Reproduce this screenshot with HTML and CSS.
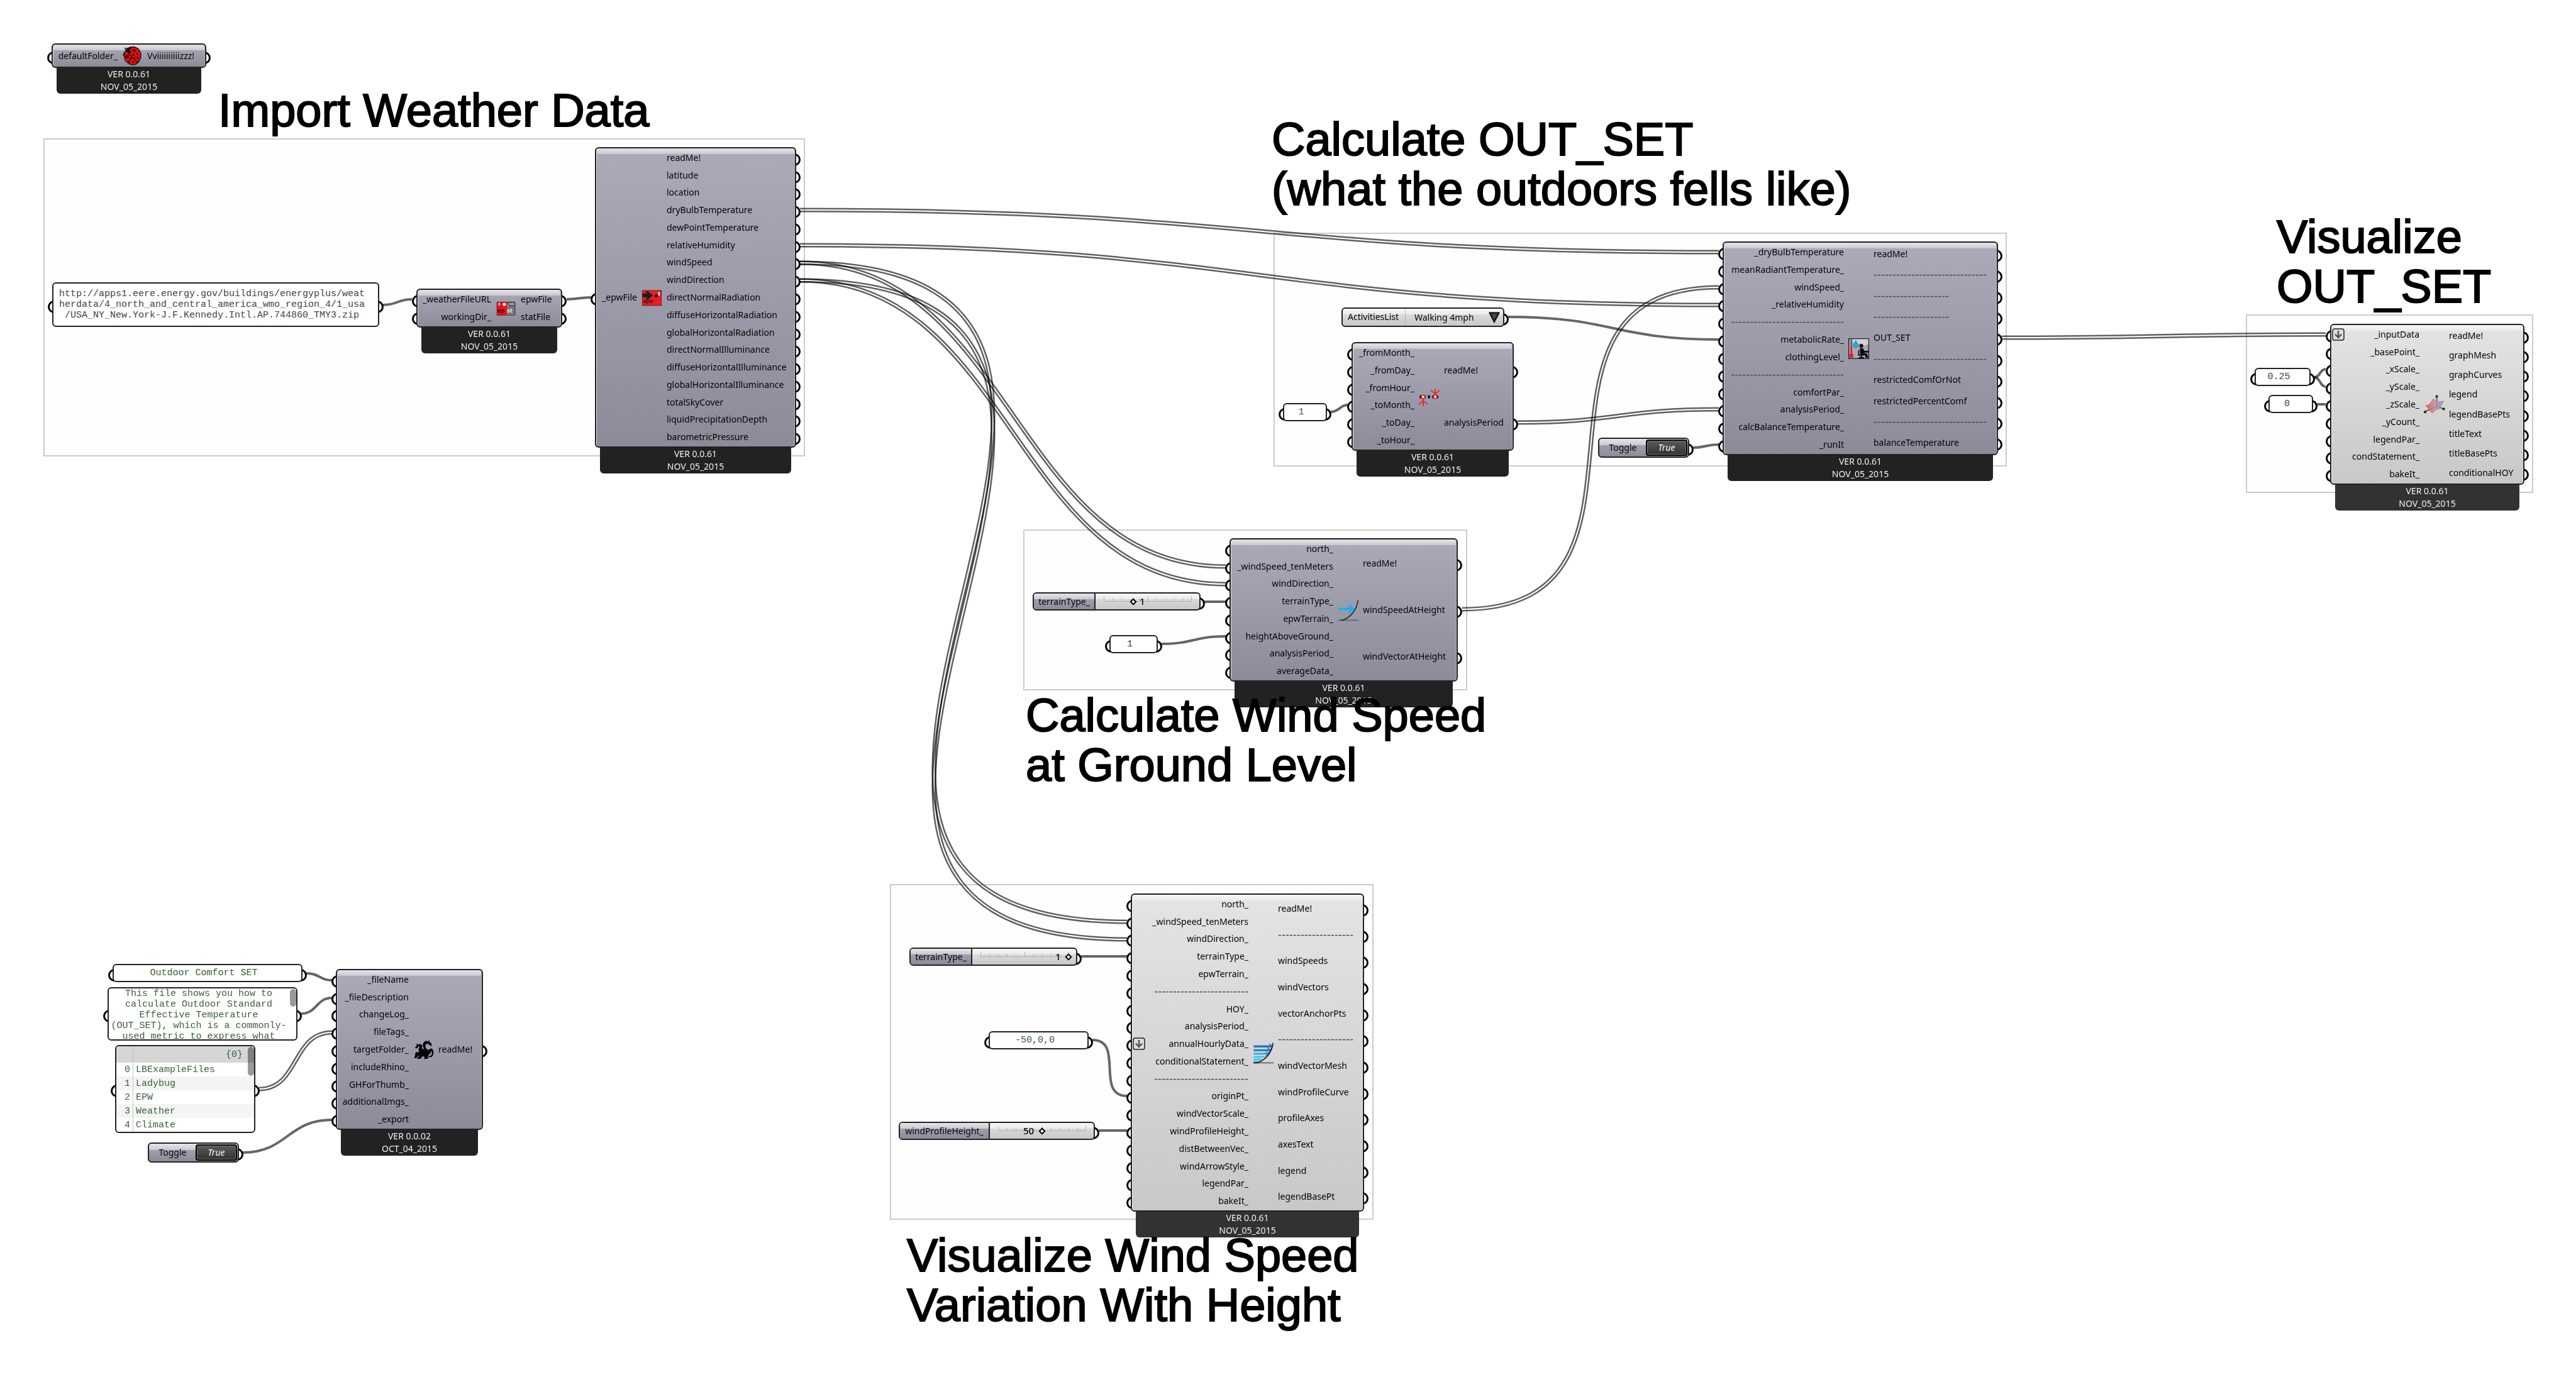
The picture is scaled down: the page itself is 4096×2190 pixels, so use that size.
FILE: index.html
```html
<!DOCTYPE html>
<html lang="en">
<head>
<meta charset="utf-8">
<title>Outdoor Comfort SET</title>
<link rel="stylesheet" href="styles.css">
</head>
<body>
<main class="canvas">

  <section class="group group-weather"></section>
  <section class="group group-set"></section>
  <section class="group group-view"></section>
  <section class="group group-wind"></section>
  <section class="group group-profile"></section>

  <svg class="wires" aria-hidden="true">
    <defs>
      <path id="w-drybulb" d="M1272 334 C2002 334 2003 401 2733 401"/>
      <path id="w-humidity" d="M1272 390 C2002 390 2003 485 2733 485"/>
      <path id="w-speed-ground" d="M1272 418 C1612 418 1609 901 1949 901"/>
      <path id="w-dir-ground" d="M1272 446 C1612 446 1609 929 1949 929"/>
      <path id="w-speed-profile" d="M1272 418 C2044 418 1020 1466 1792 1466"/>
      <path id="w-dir-profile" d="M1272 446 C2044 446 1020 1494 1792 1494"/>
      <path id="w-height-set" d="M2325 969 C2687 969 2371 457 2733 457"/>
      <path id="w-period" d="M2413 672 C2573 672 2573 651 2733 651"/>
      <path id="w-set-view" d="M3183 537 C3440 537 3441 532 3698 532"/>
      <path id="w-tags" d="M412 1732 C476 1732 464 1642 528 1642"/>
    </defs>
    <g class="wire-list"><use href="#w-drybulb"/><use href="#w-drybulb" class="core"/></g>
    <g class="wire-list"><use href="#w-humidity"/><use href="#w-humidity" class="core"/></g>
    <g class="wire-list"><use href="#w-speed-ground"/><use href="#w-speed-ground" class="core"/></g>
    <g class="wire-list"><use href="#w-dir-ground"/><use href="#w-dir-ground" class="core"/></g>
    <g class="wire-list"><use href="#w-speed-profile"/><use href="#w-speed-profile" class="core"/></g>
    <g class="wire-list"><use href="#w-dir-profile"/><use href="#w-dir-profile" class="core"/></g>
    <g class="wire-list"><use href="#w-height-set"/><use href="#w-height-set" class="core"/></g>
    <g class="wire-list"><use href="#w-period"/><use href="#w-period" class="core"/></g>
    <g class="wire-list"><use href="#w-set-view"/><use href="#w-set-view" class="core"/></g>
    <g class="wire-list"><use href="#w-tags"/><use href="#w-tags" class="core"/></g>
    <g class="wire-item">
      <path d="M609 485 C632 485 632 476 655 476"/>
      <path d="M901 476 C920 476 920 473 940 473"/>
      <path d="M2398 504 C2565 504 2566 540 2733 540"/>
      <path d="M2116 655 C2130 655 2130 644 2143 644"/>
      <path d="M2692 712 C2712 712 2712 707 2733 707"/>
      <path d="M3680 600 C3689 600 3689 587 3698 587"/>
      <path d="M3680 600 C3689 600 3689 615 3698 615"/>
      <path d="M3684 643 H3698"/>
      <path d="M1915 957 H1949"/>
      <path d="M1847 1024 C1898 1024 1898 1012 1949 1012"/>
      <path d="M1719 1521 H1792"/>
      <path d="M1737 1654 C1789 1654 1740 1743 1792 1743"/>
      <path d="M1747 1798 H1792"/>
      <path d="M487 1548 C508 1548 508 1559 528 1559"/>
      <path d="M479 1612 C504 1612 503 1587 528 1587"/>
      <path d="M386 1833 C457 1833 457 1781 528 1781"/>
    </g>
  </svg>

  <!-- Ladybug -->
  <article class="node node-ladybug">
    <div class="body">
      <ul class="inputs"><li>defaultFolder_</li></ul>
      <svg class="icon" viewBox="0 0 24 24">
        <path d="M5 5 3 3M5 3l3 2M8 2l2 2M3 8 1 12" stroke="#222" stroke-width="1.2" fill="none"/>
        <path d="M9 2.500C14 .5 20 3 21.500 9c1.500 7-3 13-8.500 13.500C6.500 22.500 2 17 2.500 11 3 7 5 4 9 2.500z" fill="#f20808" stroke="#111" stroke-width="1"/>
        <path d="M4 7C5 4 8 2.500 11 3l-2 3-3 2z" fill="#151515"/>
        <path d="M7 9 18 20" stroke="#111" stroke-width=".8"/>
        <g fill="#111"><circle cx="8.500" cy="8" r="1.800"/><circle cx="14" cy="6" r="1.800"/><circle cx="17.500" cy="10" r="1.200"/><circle cx="13" cy="11" r="1.200"/><circle cx="6" cy="13" r="2"/><circle cx="10" cy="15.500" r="1.400"/><circle cx="18" cy="14.500" r="1.300"/><circle cx="14.500" cy="14.500" r=".9"/><circle cx="8.500" cy="19" r="1.200"/><circle cx="13" cy="19.500" r="1.100"/></g>
      </svg>
      <ul class="outputs"><li>Vviiiiiiiiiizzz!</li></ul>
    </div>
    <footer>VER 0.0.61<br>NOV_05_2015</footer>
  </article>

  <h2 class="title title-weather">Import Weather Data</h2>

  <div class="panel panel-url"><div class="sheet">http://apps1.eere.energy.gov/buildings/energyplus/weat<br>herdata/4_north_and_central_america_wmo_region_4/1_usa<br>/USA_NY_New.York-J.F.Kennedy.Intl.AP.744860_TMY3.zip</div></div>

  <article class="node node-download">
    <div class="body">
      <ul class="inputs"><li>_weatherFileURL</li><li>workingDir_</li></ul>
      <svg class="icon" viewBox="0 0 24 24">
        <rect x="1.500" y="4.500" width="12" height="15.500" fill="#e8131b"/>
        <rect x="13.500" y="9.500" width="9.500" height="10.500" fill="#77777c"/>
        <rect x="1.500" y="4.500" width="21" height="15.500" rx="1" fill="none" stroke="#333" stroke-width=".8" stroke-dasharray="1.500 .7"/>
        <path d="M14 5h8v4h-6z" fill="#9a9aa4" stroke="#333" stroke-width=".8"/>
        <rect x="3.500" y="5.500" width="1.300" height="3" fill="#fff"/><circle cx="10" cy="7.500" r="1.800" fill="#fff"/>
        <text x="2" y="17" font-size="7" font-weight="700" fill="#3a0508">ep</text><text x="13" y="17" font-size="7" font-weight="700" fill="#eee">st</text>
      </svg>
      <ul class="outputs"><li>epwFile</li><li>statFile</li></ul>
    </div>
    <footer>VER 0.0.61<br>NOV_05_2015</footer>
  </article>

  <article class="node node-epw">
    <div class="body">
      <ul class="inputs"><li>_epwFile</li></ul>
      <svg class="icon" viewBox="0 0 24 24">
        <rect x="1" y="3.500" width="22" height="17.500" fill="#ec1c24" stroke="#5a1216" stroke-width=".8" stroke-dasharray="1.500 .7"/>
        <path d="M1 7h6L4 4.500h3.500L13.500 9.500 7.500 14H4l3-2.500H1z" fill="#1c1c1c"/>
        <circle cx="17" cy="9.800" r="1.900" fill="#1c1c1c"/><rect x="19.500" y="5.500" width="1.600" height="4" fill="#fff"/>
        <text x="2" y="18.500" font-size="6" font-style="italic" font-weight="700" fill="#4a0a0d">epw</text>
      </svg>
      <ul class="outputs"><li>readMe!</li><li>latitude</li><li>location</li><li>dryBulbTemperature</li><li>dewPointTemperature</li><li>relativeHumidity</li><li>windSpeed</li><li>windDirection</li><li>directNormalRadiation</li><li>diffuseHorizontalRadiation</li><li>globalHorizontalRadiation</li><li>directNormalIlluminance</li><li>diffuseHorizontalIlluminance</li><li>globalHorizontalIlluminance</li><li>totalSkyCover</li><li>liquidPrecipitationDepth</li><li>barometricPressure</li></ul>
    </div>
    <footer>VER 0.0.61<br>NOV_05_2015</footer>
  </article>

  <!-- Outdoor comfort -->
  <h2 class="title title-set">Calculate OUT_SET<br>(what the outdoors fells like)</h2>

  <div class="picker">
    <div class="picker-box">
      <label for="activity">ActivitiesList</label>
      <select id="activity"><option>Walking 4mph</option></select>
      <svg class="arrow" viewBox="0 0 18 18"><path d="M1.500 1.500h15L9 16z" fill="#444" stroke="#000" stroke-width="2"/></svg>
    </div>
  </div>

  <div class="panel panel-month"><div class="sheet green">1</div></div>

  <article class="node node-period">
    <div class="body">
      <ul class="inputs"><li>_fromMonth_</li><li>_fromDay_</li><li>_fromHour_</li><li>_toMonth_</li><li>_toDay_</li><li>_toHour_</li></ul>
      <svg class="icon" viewBox="0 0 24 24">
        <path d="M1 12.500h7M10.500 12.500h2.500M15.500 12.500h7" stroke="#111" stroke-width="3.500"/>
        <g stroke="#ee1c24" stroke-width="1.300" fill="none"><path d="M5 14v9M5 17l-5 4M5 17l5 4M19 11V3M19 9l-5-4M19 9l5-4"/><circle cx="5" cy="12.500" r="2" fill="#fff"/><circle cx="19" cy="12.300" r="2" fill="#fff"/></g>
      </svg>
      <ul class="outputs"><li>readMe!</li><li>analysisPeriod</li></ul>
    </div>
    <footer>VER 0.0.61<br>NOV_05_2015</footer>
  </article>

  <div class="toggle toggle-run">
    <div class="toggle-box"><label for="run">Toggle</label><button id="run" type="button">True</button></div>
  </div>

  <article class="node node-set">
    <div class="body">
      <ul class="inputs"><li>_dryBulbTemperature</li><li>meanRadiantTemperature_</li><li>windSpeed_</li><li>_relativeHumidity</li><li class="rule">------------------------------</li><li>metabolicRate_</li><li>clothingLevel_</li><li class="rule">------------------------------</li><li>comfortPar_</li><li>analysisPeriod_</li><li>calcBalanceTemperature_</li><li>_runIt</li></ul>
      <svg class="icon" viewBox="0 0 24 24">
        <rect x=".5" y=".5" width="23" height="23" fill="#a9a9b2" stroke="#222"/>
        <path d="M5 1h18v6l-5 1-4-2-4 1-5-2z" fill="#d2d2d6"/>
        <path d="M8.500 2.500c1.500 2.500 3 4 3 5.500a2.900 2.900 0 0 1-5.800 0c0-1.500 1.500-3 2.800-5.500z" fill="#29a9e1" stroke="#1579a8" stroke-width=".5"/>
        <path d="M3.500 2v9" stroke="#555" stroke-width="1.500"/><path d="M3.500 10v9" stroke="#ed1c24" stroke-width="2"/><circle cx="3.500" cy="20.300" r="2.400" fill="#ed1c24"/>
        <circle cx="15" cy="8.800" r="2.200" fill="#0c0c0c"/>
        <path d="M13 11.500h4l1.500 3h5v2h-5l.5 1h2.500l1.500 5h-3l-1-3h-5z" fill="#0c0c0c"/><path d="M12 14v5.500h6M15 19v3.500M12 22.500h6" stroke="#0c0c0c" stroke-width="1.400" fill="none"/>
      </svg>
      <ul class="outputs"><li>readMe!</li><li class="rule">------------------------------</li><li class="rule">--------------------</li><li class="rule">--------------------</li><li>OUT_SET</li><li class="rule">------------------------------</li><li>restrictedComfOrNot</li><li>restrictedPercentComf</li><li class="rule">------------------------------</li><li>balanceTemperature</li></ul>
    </div>
    <footer>VER 0.0.61<br>NOV_05_2015</footer>
  </article>

  <!-- Visualize OUT_SET -->
  <h2 class="title title-view">Visualize<br>OUT_SET</h2>

  <div class="panel panel-scale"><div class="sheet">0.25</div></div>
  <div class="panel panel-zero"><div class="sheet">0</div></div>

  <article class="node light node-view">
    <div class="body">
      <ul class="inputs"><li><svg class="flatten" viewBox="0 0 20 20"><rect x="1" y="1" width="18" height="18" rx="3" fill="#dcdcdc" stroke="#222" stroke-width="1.500"/><path d="M10 4v10M5 9.500l5 5.500 5-5.500" fill="none" stroke="#555" stroke-width="2.500"/></svg>_inputData</li><li>_basePoint_</li><li>_xScale_</li><li>_yScale_</li><li>_zScale_</li><li>_yCount_</li><li>legendPar_</li><li>condStatement_</li><li>bakeIt_</li></ul>
      <svg class="icon" viewBox="0 0 24 24">
        <defs><linearGradient id="surf"><stop offset="0" stop-color="#e8473f"/><stop offset=".5" stop-color="#c98d9c"/><stop offset="1" stop-color="#6f9fdc"/></linearGradient></defs>
        <path d="M15 3v11M15 14l8 3M15 14 1.500 20" stroke="#444" stroke-width="1"/>
        <path d="M2 13c4 0 6-3 9-8 3 3 7 4 12 3-2 3-3 6-5 9-2 0-5 1-8 5-2-1-3-4-8-9z" fill="url(#surf)" fill-opacity=".85" stroke="#a66" stroke-width=".4"/>
        <g fill="#222"><circle cx="15" cy="2.500" r="1.500"/><circle cx="23" cy="17" r="1.500"/><circle cx="1.500" cy="20.500" r="1.500"/></g>
      </svg>
      <ul class="outputs"><li>readMe!</li><li>graphMesh</li><li>graphCurves</li><li>legend</li><li>legendBasePts</li><li>titleText</li><li>titleBasePts</li><li>conditionalHOY</li></ul>
    </div>
    <footer>VER 0.0.61<br>NOV_05_2015</footer>
  </article>

  <!-- Wind speed at ground level -->
  <div class="slider slider-ground">
    <div class="slider-box">
      <label for="terrain-a">terrainType_</label>
      <div class="rail">
        <svg class="ticks" viewBox="0 0 140 8"><path d="M0 7.500h140M.5 0v8M14.500 3v5M28.500 3v5M42.500 3v5M56.500 3v5M70.500 0v8M84.500 3v5M98.500 3v5M112.500 3v5M126.500 3v5M139.500 0v8"/></svg>
        <input id="terrain-a" type="range" min="0" max="3" value="1">
        <output for="terrain-a">1</output>
      </div>
    </div>
  </div>
  <div class="panel panel-height"><div class="sheet">1</div></div>

  <article class="node node-ground">
    <div class="body">
      <ul class="inputs"><li>north_</li><li>_windSpeed_tenMeters</li><li>windDirection_</li><li>terrainType_</li><li>epwTerrain_</li><li>heightAboveGround_</li><li>analysisPeriod_</li><li>averageData_</li></ul>
      <svg class="icon" viewBox="0 0 24 24">
        <path d="M.5 23.500H24" stroke="#666" stroke-width="1.200"/>
        <path d="M1 10.500h14M13 6l5 4.500-5 4.500" stroke="#12b4f5" stroke-width="2.600" fill="none"/>
        <path d="M3 23.500h3C15 20 22 12 23.500.5" stroke="#333" stroke-width="1.300" fill="none"/>
      </svg>
      <ul class="outputs"><li>readMe!</li><li>windSpeedAtHeight</li><li>windVectorAtHeight</li></ul>
    </div>
    <footer>VER 0.0.61<br>NOV_05_2015</footer>
  </article>
  <h2 class="title title-ground">Calculate Wind Speed<br>at Ground Level</h2>

  <!-- Wind profile -->
  <div class="slider slider-terrain">
    <div class="slider-box">
      <label for="terrain-b">terrainType_</label>
      <div class="rail">
        <svg class="ticks" viewBox="0 0 140 8"><path d="M0 7.500h140M.5 0v8M14.500 3v5M28.500 3v5M42.500 3v5M56.500 3v5M70.500 0v8M84.500 3v5M98.500 3v5M112.500 3v5M126.500 3v5M139.500 0v8"/></svg>
        <input id="terrain-b" type="range" min="0" max="1" value="1">
        <output for="terrain-b">1</output>
      </div>
    </div>
  </div>
  <div class="panel panel-origin"><div class="sheet green">-50,0,0</div></div>
  <div class="slider slider-profile">
    <div class="slider-box">
      <label for="profile">windProfileHeight_</label>
      <div class="rail">
        <svg class="ticks" viewBox="0 0 140 8"><path d="M0 7.500h140M.5 0v8M14.500 3v5M28.500 3v5M42.500 3v5M56.500 3v5M70.500 0v8M84.500 3v5M98.500 3v5M112.500 3v5M126.500 3v5M139.500 0v8"/></svg>
        <input id="profile" type="range" min="0" max="100" value="50">
        <output for="profile">50</output>
      </div>
    </div>
  </div>

  <article class="node light node-profile">
    <div class="body">
      <ul class="inputs"><li>north_</li><li>_windSpeed_tenMeters</li><li>windDirection_</li><li>terrainType_</li><li>epwTerrain_</li><li class="rule">-------------------------</li><li>HOY_</li><li>analysisPeriod_</li><li><svg class="flatten" viewBox="0 0 20 20"><rect x="1" y="1" width="18" height="18" rx="3" fill="#dcdcdc" stroke="#222" stroke-width="1.500"/><path d="M10 4v10M5 9.500l5 5.500 5-5.500" fill="none" stroke="#555" stroke-width="2.500"/></svg>annualHourlyData_</li><li>conditionalStatement_</li><li class="rule">-------------------------</li><li>originPt_</li><li>windVectorScale_</li><li>windProfileHeight_</li><li>distBetweenVec_</li><li>windArrowStyle_</li><li>legendPar_</li><li>bakeIt_</li></ul>
      <svg class="icon" viewBox="0 0 24 24">
        <path d="M.5 23.500H24" stroke="#666" stroke-width="1.200"/>
        <path d="M1 4.500h21" stroke="#1f6fb8" stroke-width="2.400"/><path d="M1 9h20" stroke="#2484c8" stroke-width="2.400"/><path d="M1 13h18" stroke="#22a5e6" stroke-width="1.800"/><path d="M1 16.500h13M1 19.500h9M1 22h5" stroke="#35c6f4" stroke-width="1.800"/>
        <path d="M19 1.500l4 3-3 4.500M17 6l3.500 3-3 4M15 11l3 2-3 3" stroke="#1f7cc4" stroke-width="1.200" fill="none"/>
        <path d="M1 23.500h4C15 20 22 12 23.500.5" stroke="#222" stroke-width="1.300" fill="none"/>
      </svg>
      <ul class="outputs"><li>readMe!</li><li class="rule">--------------------</li><li>windSpeeds</li><li>windVectors</li><li>vectorAnchorPts</li><li class="rule">--------------------</li><li>windVectorMesh</li><li>windProfileCurve</li><li>profileAxes</li><li>axesText</li><li>legend</li><li>legendBasePt</li></ul>
    </div>
    <footer>VER 0.0.61<br>NOV_05_2015</footer>
  </article>
  <h2 class="title title-profile">Visualize Wind Speed<br>Variation With Height</h2>

  <!-- Export -->
  <div class="panel panel-name"><div class="sheet green">Outdoor Comfort SET</div></div>
  <div class="panel panel-about"><div class="sheet green">This file shows you how to<br>calculate Outdoor Standard<br>Effective Temperature<br>(OUT_SET), which is a commonly-<br>used metric to express what</div><i class="scroll"></i></div>
  <div class="panel panel-tags">
    <table class="sheet green">
      <thead><tr><th></th><th scope="col">{0}</th></tr></thead>
      <tbody>
        <tr><td>0</td><td>LBExampleFiles</td></tr>
        <tr><td>1</td><td>Ladybug</td></tr>
        <tr><td>2</td><td>EPW</td></tr>
        <tr><td>3</td><td>Weather</td></tr>
        <tr><td>4</td><td>Climate</td></tr>
      </tbody>
    </table>
    <i class="scroll"></i>
  </div>
  <div class="toggle toggle-export">
    <div class="toggle-box"><label for="export">Toggle</label><button id="export" type="button">True</button></div>
  </div>

  <article class="node node-export">
    <div class="body">
      <ul class="inputs"><li>_fileName</li><li>_fileDescription</li><li>changeLog_</li><li>fileTags_</li><li>targetFolder_</li><li>includeRhino_</li><li>GHForThumb_</li><li>additionalImgs_</li><li>_export</li></ul>
      <svg class="icon" viewBox="0 0 24 24">
        <path d="M13 11.500C10.500 8 10.500 5 13 2.500c1.500-1 3.500-1 4.500 0l1-2 .5 2.500 2 1.500.3 3.500-1.300-.5-3-2.500-2 .5c-1.500 1.500-1 3.500.5 5.500l2.500 1.500c1-2 2.500-2.500 4-1.500 2 2 2 5.500.5 8l-1.500 1.500h-3.500l1-1.500h2c1.500-2 1.500-3.500.5-5.500-1 2-1.500 3.500-3 4.500l-1 1.500.5 1.500-1 1.500h-4.500l1.500-2-2.500-1-2.500 3H4.500l2-4-1 .5-2 3-1.500-.5-1 .5 1-3 .5-3 1-1.500 2 .5 1.500-1-1-2 1-3-.5-2-1.500 3-1.500.5-1.500-1L2.500 9 4 7V4.500l1.500 1.500c2-1 4-.8 5 1.500L10 10.500z" fill="#060606"/>
      </svg>
      <ul class="outputs"><li>readMe!</li></ul>
    </div>
    <footer>VER 0.0.02<br>OCT_04_2015</footer>
  </article>

</main>
</body>
</html>
```
FILE: styles.css
```css
* { box-sizing: border-box; }
html, body { height: 100%; }
body {
  margin: 0;
  background: #fff;
  color: #000;
  font: 14px/20px "Noto Sans", "Open Sans", sans-serif;
}
ul { list-style: none; margin: 0; padding: 0; }

.canvas { position: relative; width: 100%; min-height: 100%; overflow: hidden; }

/* Group frames */
.group { position: absolute; border: 2px solid #cbcbcb; background: #fefefe; }
.group-weather { left: 69px; top: 220px; width: 1211px; height: 506px; }
.group-set { left: 2025px; top: 370px; width: 1166px; height: 372px; }
.group-view { left: 3571px; top: 500px; width: 457px; height: 284px; }
.group-wind { left: 1627px; top: 842px; width: 706px; height: 256px; }
.group-profile { left: 1415px; top: 1406px; width: 769px; height: 534px; }

/* Wires */
.wires { position: absolute; left: 0; top: 0; width: 100%; height: 100%; fill: none; }
.wire-list { mix-blend-mode: multiply; stroke: #606060; stroke-width: 7px; }
.wire-list .core { stroke: #fff; stroke-width: 2px; }
.wire-item path { mix-blend-mode: multiply; stroke: #666; stroke-width: 4px; }

/* Headings */
.title {
  position: absolute;
  margin: 0;
  font: 400 74px/79px "Liberation Sans", Arial, sans-serif;
  white-space: nowrap;
  -webkit-text-stroke: 2px #000;
}
.title-weather { left: 347px; top: 136px; }
.title-set { left: 2022px; top: 182px; }
.title-view { left: 3620px; top: 337px; }
.title-ground { left: 1631px; top: 1098px; }
.title-profile { left: 1442px; top: 1957px; }

/* Components */
.node, .panel, .toggle, .slider, .picker { position: absolute; isolation: isolate; }
.body {
  display: flex;
  padding: 1px 0;
  border: 2px solid #222;
  border-radius: 6px;
  background: linear-gradient(#e6e5ea, #c8c8d1) 0 0 / 100% 9px no-repeat,
              linear-gradient(#abaab8, #8c8b99);
  box-shadow: inset 1px 1px 0 #dddde3, inset -1px 0 0 #b9b9c4;
}
.light .body {
  background: linear-gradient(#f7f7f7, #eaeaea) 0 0 / 100% 9px no-repeat,
              linear-gradient(#e4e4e4, #c8c8c8);
  box-shadow: inset 1px 1px 0 #f6f6f6, inset -1px 0 0 #e0e0e0;
}
.inputs, .outputs { display: flex; flex-direction: column; white-space: nowrap; }
.inputs { flex: 1; }
.inputs li, .outputs li { position: relative; flex: 1; display: flex; align-items: center; }
.inputs li { justify-content: flex-end; }
.icon { flex: none; align-self: center; width: 33px; height: 33px; margin: 0 7px; overflow: visible; }
.rule { font: 18px/20px "Liberation Sans", Arial, sans-serif; color: #4a4a50; }
.flatten { position: absolute; left: 1px; top: calc(50% - 10px); width: 20px; height: 20px; }
.node footer {
  height: 41px;
  margin: 0 8px;
  border-radius: 0 0 6px 6px;
  background: #222;
  color: #f0f0f0;
  text-align: center;
}
.light footer { background: #323232; }

/* Ports */
.inputs li::before, .outputs li::after,
.panel::before, .panel::after, .toggle::after, .slider::after, .picker::after {
  content: "";
  position: absolute;
  z-index: -1;
  top: calc(50% - 7px);
  width: 14px;
  height: 14px;
  border: 3px solid #000;
  border-radius: 50%;
  background: #fff;
}
.inputs li::before { left: -9px; }
.outputs li::after { right: -9px; }
.panel::before { left: -7px; }
.panel::after, .toggle::after, .slider::after, .picker::after { right: -7px; }

.node-ladybug { left: 82px; top: 69px; width: 246px; }
.node-ladybug .body { height: 39px; }
.node-ladybug .outputs { width: 92px; }
.node-download { left: 662px; top: 459px; width: 232px; }
.node-download .body { height: 62px; }
.node-download .outputs { width: 64px; }
.node-epw { left: 946px; top: 234px; width: 320px; }
.node-epw .body { height: 478px; }
.node-epw .outputs { width: 204px; }
.node-period { left: 2149px; top: 544px; width: 258px; }
.node-period .body { height: 173px; }
.node-period .outputs { width: 109px; }
.node-set { left: 2739px; top: 384px; width: 438px; }
.node-set .body { height: 340px; }
.node-set .outputs { width: 196px; }
.node-view { left: 3705px; top: 515px; width: 309px; }
.node-view .body { height: 256px; }
.node-view .outputs { width: 118px; }
.node-ground { left: 1955px; top: 856px; width: 363px; }
.node-ground .body { height: 228px; }
.node-ground .outputs { width: 149px; }
.node-profile { left: 1798px; top: 1421px; width: 371px; }
.node-profile .body { height: 506px; }
.node-profile .outputs { width: 135px; }
.node-export { left: 534px; top: 1541px; width: 234px; }
.node-export .body { height: 256px; }
.node-export .outputs { width: 69px; }

/* Text panels */
.sheet {
  display: flex;
  align-items: center;
  justify-content: center;
  width: 100%;
  height: 100%;
  padding-right: 12px;
  border: 2px solid #222;
  border-radius: 6px;
  background: #fff;
  color: #444;
  font: 15px/17px "Liberation Mono", "Courier New", monospace;
  text-align: center;
  white-space: nowrap;
}
.sheet.green { color: #3a5f3a; }
.panel-url { left: 83px; top: 449px; width: 520px; height: 71px; }
.panel-month { left: 2040px; top: 641px; width: 70px; height: 29px; }
.panel-scale { left: 3585px; top: 585px; width: 89px; height: 29px; }
.panel-zero { left: 3607px; top: 628px; width: 71px; height: 29px; }
.panel-height { left: 1764px; top: 1010px; width: 77px; height: 29px; }
.panel-origin { left: 1572px; top: 1640px; width: 159px; height: 29px; }
.panel-name { left: 179px; top: 1533px; width: 302px; height: 29px; }
.panel-about { left: 171px; top: 1570px; width: 302px; height: 85px; }
.panel-about .sheet { overflow: hidden; padding-top: 3px; }
.panel-tags { left: 183px; top: 1662px; width: 223px; height: 140px; }
.scroll { position: absolute; right: 2px; top: 3px; width: 10px; height: 28px; border-radius: 5px; background: rgba(0, 0, 0, .4); }
.panel-tags .scroll { height: 46px; }

table.sheet { display: table; table-layout: fixed; padding: 0; border-spacing: 0; border-collapse: separate; overflow: hidden; }
.sheet th, .sheet td { height: 22px; padding: 0 4px; font-weight: 400; text-align: left; }
.sheet th { height: 26px; background: #d6d6d6; }
.sheet th:last-child { padding-right: 18px; text-align: right; }
.sheet tr > :first-child { width: 27px; border-right: 1px solid #c4c4c4; text-align: right; }
.sheet tbody tr:nth-child(even) { background: #f4f4f4; }

/* Boolean toggles */
.toggle { width: 145px; height: 32px; }
.toggle-run { left: 2541px; top: 696px; }
.toggle-export { left: 235px; top: 1817px; }
.toggle-box {
  display: flex;
  height: 100%;
  padding: 1px;
  border: 2px solid #222;
  border-radius: 6px;
  background: linear-gradient(#e6e5ea, #c8c8d1) 0 0 / 100% 10px no-repeat,
              linear-gradient(#abaab8, #8c8b99);
}
.toggle label { flex: 1; line-height: 26px; text-align: center; }
.toggle button {
  width: 66px;
  padding: 0;
  border: 2px solid #000;
  border-radius: 4px;
  background: linear-gradient(#5a5a5a, #333);
  box-shadow: inset 0 0 0 1px #777;
  color: #fff;
  font: italic 14px/20px "Noto Sans", sans-serif;
}

/* Value list */
.picker { left: 2133px; top: 489px; width: 259px; height: 31px; }
.picker-box {
  position: relative;
  display: flex;
  height: 100%;
  border: 2px solid #222;
  border-radius: 6px;
  background: linear-gradient(#f7f7f7, #eaeaea) 0 0 / 100% 9px no-repeat,
              linear-gradient(#e4e4e4, #c8c8c8);
}
.picker label { width: 100px; padding-left: 8px; line-height: 26px; border-right: 1px solid #b4b4b4; }
.picker select {
  flex: 1;
  appearance: none;
  padding: 0 0 0 14px;
  border: 0;
  background: none;
  color: #000;
  font: 14px/20px "Noto Sans", sans-serif;
}
.arrow { position: absolute; right: 5px; top: 5px; width: 18px; height: 18px; pointer-events: none; }

/* Number sliders */
.slider { width: 267px; height: 29px; }
.slider-ground { left: 1642px; top: 942px; }
.slider-terrain { left: 1446px; top: 1507px; }
.slider-profile { left: 1429px; top: 1784px; width: 312px; }
.slider-box {
  display: flex;
  height: 100%;
  border: 2px solid #222;
  border-radius: 6px;
  background: linear-gradient(#f7f7f7, #eaeaea) 0 0 / 100% 9px no-repeat,
              linear-gradient(#e4e4e4, #c8c8c8);
}
.slider label {
  flex: 1;
  border-right: 2px solid #222;
  border-radius: 4px 0 0 4px;
  background: linear-gradient(#e6e5ea, #c8c8d1) 0 0 / 100% 9px no-repeat,
              linear-gradient(#abaab8, #8c8b99);
  line-height: 25px;
  text-align: center;
}
.rail { position: relative; width: 165px; padding: 0 9px; }
.ticks { position: absolute; left: 13px; top: 5px; width: 140px; height: 8px; fill: none; stroke: #b0b0b0; }
.slider input { position: relative; display: block; appearance: none; width: 148px; height: 25px; margin: 0; background: none; }
.slider input::-webkit-slider-thumb {
  appearance: none;
  width: 8px;
  height: 8px;
  border: 2px solid #000;
  background: #fff;
  transform: rotate(45deg);
}
.slider output { position: absolute; top: 2px; font-size: 15px; font-weight: 500; }
.slider-ground output { left: 70px; }
.slider-terrain output { left: 132px; }
.slider-profile output { left: 53px; }
```
